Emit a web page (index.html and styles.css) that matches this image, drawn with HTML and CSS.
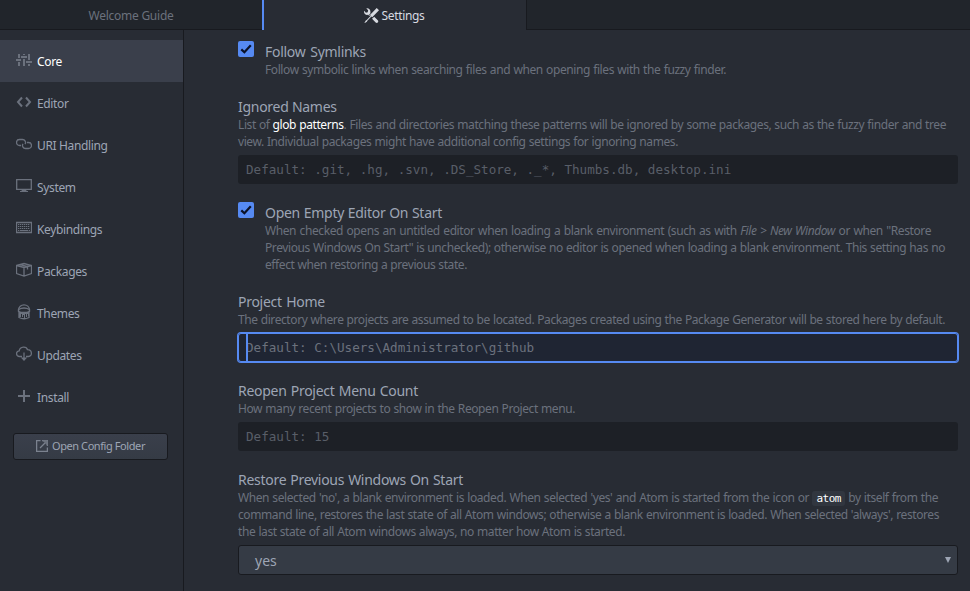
FILE: index.html
```html
<!DOCTYPE html>
<html lang="en">
<head>
<meta charset="utf-8">
<title>Settings</title>
<link rel="stylesheet" href="styles.css">
</head>
<body>
<header class="tabs">
  <div class="tab"><span class="tab-guide">Welcome Guide</span></div>
  <div class="tab active">
    <svg class="tools" viewBox="0 0 16 16"><path d="M4.48 7.27c.26.26 1.28 1.33 1.28 1.33l.56-.58-.88-.91 1.69-1.8s-.76-.74-.43-.45c.32-1.19.03-2.51-.87-3.44C4.93.5 3.66.2 2.52.51l1.93 2-.51 1.96-1.89.52-1.93-1.98C-.19 4.17.1 5.48 1 6.4c.94.98 2.29 1.26 3.48.87zm6.44 1.94l-2.33 2.3 3.84 3.98c.31.33.73.49 1.14.49.41 0 .82-.16 1.14-.49.63-.65.63-1.7 0-2.35l-3.79-3.93zM16 2.53L13.55 0 6.33 7.46l.88.91-4.31 4.46-.99.53-1.39 2.27.35.37 2.2-1.44.51-1.02L7.9 9.08l.88.91L16 2.53z"/></svg>
    <span class="tab-settings">Settings</span>
  </div>
</header>
<div class="body">
  <nav class="sidebar">
    <a class="item selected"><svg class="icon solid" viewBox="0 0 16 16"><path d="M2 2h2v4H2zM0 7h5v2H0zM2 10h2v4H2zM7 2h2v1H7zM5 4h6v2H5zM7 7h2v7H7zM12 2h2v6h-2zM10 9h6v2h-6zM12 12h2v2h-2z"/></svg><span>Core</span></a>
    <a class="item"><svg class="icon thick" viewBox="0 0 16 16"><path d="M6 3.500 2 8l4 4.500M10 3.500 14 8l-4 4.500"/></svg><span>Editor</span></a>
    <a class="item"><svg class="icon" viewBox="0 0 16 16"><path d="M5 9.500H3.500a3 3 0 0 1 0-6h3a3 3 0 0 1 2.500 4.700M11 6.500h1.500a3 3 0 0 1 0 6h-3A3 3 0 0 1 7 7.800"/></svg><span>URI Handling</span></a>
    <a class="item"><svg class="icon" viewBox="0 0 16 16"><path d="M.7 1.700h14.600v9.600H.7z"/><path class="fill" d="M6 11h4l.5 2H12v1H4v-1h1.500z"/></svg><span>System</span></a>
    <a class="item"><svg class="icon" viewBox="0 0 16 16"><path d="M.5 2.500h15v10H.5z"/><path class="keys" d="M2 4.500h12M2 6.500h12M2 8.500h12"/><path class="keys space" d="M2 10.500h12"/></svg><span>Keybindings</span></a>
    <a class="item"><svg class="icon" viewBox="0 0 16 16"><path d="M.5 3.500 8 1.500l7.500 2v8L8 14l-7.500-2.500zM.5 3.500 8 5.500l7.500-2M8 5.500V14M4 2.600l7.500 2v3"/></svg><span>Packages</span></a>
    <a class="item"><svg class="icon" viewBox="0 0 16 16"><path d="M2.500 6.500C2.500-1 13.500-1 13.500 6.500M3 7v6.500q5 2.500 10 0V7"/><path d="M2.500 5.500q5.500-3 11 0v2q-5.500 2-11 0z"/><path class="fill" d="M3 8h10v4h-1v-2h-1v3h-1v-3H9v4H8v-3H7v2H6v-3H5v3H3z"/></svg><span>Themes</span></a>
    <a class="item"><svg class="icon cloud" viewBox="0 0 16 16"><path d="M6 10.500H3.500a2.800 2.800 0 0 1-.3-5.600C4 .2 10.500.2 11.500 3.700c5 0 5 6.800 1 6.800H10M8 6.500v6"/><path class="fill" d="M4.800 11.500h6.400L8 15z"/></svg><span>Updates</span></a>
    <a class="item"><svg class="icon thick" viewBox="0 0 16 16"><path d="M8 2v12M2 8h12"/></svg><span>Install</span></a>
    <button class="config"><svg class="external" viewBox="0 0 12 12"><path d="M4.500.700H.600v10.700h10.800V7.500M4 8l5-5M6 .700h5.400v5.300"/><path class="fill" d="M6 .3h5.700V6z"/></svg><span>Open Config Folder</span></button>
  </nav>
  <main class="panel">
    <section class="setting check">
      <span class="box"><svg viewBox="0 0 16 16"><path d="M3.300 8.400 6.400 11.300 12.800 4.300"/></svg></span>
      <h3><span class="t1">Follow Symlinks</span></h3>
      <p><span class="w461">Follow symbolic links when searching files and when opening files with the fuzzy finder.</span></p>
    </section>
    <section class="setting">
      <h3><span class="t2">Ignored Names</span></h3>
      <p><span class="w708">List of <b>glob patterns</b>. Files and directories matching these patterns will be ignored by some packages, such as the fuzzy finder and tree</span>
      <span class="w440">view. Individual packages might have additional config settings for ignoring names.</span></p>
      <div class="input">Default: .git, .hg, .svn, .DS_Store, ._*, Thumbs.db, desktop.ini</div>
    </section>
    <section class="setting check">
      <span class="box"><svg viewBox="0 0 16 16"><path d="M3.300 8.400 6.400 11.300 12.800 4.300"/></svg></span>
      <h3><span class="t3">Open Empty Editor On Start</span></h3>
      <p><span class="w666">When checked opens an untitled editor when loading a blank environment (such as with <em>File &gt; New Window</em> or when "Restore</span>
      <span class="w680">Previous Windows On Start" is unchecked); otherwise no editor is opened when loading a blank environment. This setting has no</span>
      <span class="w202">effect when restoring a previous state.</span></p>
    </section>
    <section class="setting">
      <h3><span class="t4">Project Home</span></h3>
      <p><span class="w707">The directory where projects are assumed to be located. Packages created using the Package Generator will be stored here by default.</span></p>
      <div class="input focused">Default: C:\Users\Administrator\github</div>
    </section>
    <section class="setting">
      <h3><span class="t5">Reopen Project Menu Count</span></h3>
      <p><span class="w337">How many recent projects to show in the Reopen Project menu.</span></p>
      <div class="input">Default: 15</div>
    </section>
    <section class="setting">
      <h3><span class="t6">Restore Previous Windows On Start</span></h3>
      <p><span class="w700">When selected 'no', a blank environment is loaded. When selected 'yes' and Atom is started from the icon or <code>atom</code> by itself from the</span>
      <span class="w701">command line, restores the last state of all Atom windows; otherwise a blank environment is loaded. When selected 'always', restores</span>
      <span class="w387">the last state of all Atom windows always, no matter how Atom is started.</span></p>
      <div class="select"><span>yes</span><i></i></div>
    </section>
  </main>
</div>
</body>
</html>
```
FILE: styles.css
```css
* { box-sizing: border-box; }
body {
  margin: 0;
  height: 591px;
  overflow: hidden;
  display: flex;
  flex-direction: column;
  background: #282c34;
  color: #9da5b4;
  font-family: "Noto Sans", "Open Sans", sans-serif;
  font-size: 12px;
}
svg { display: block; flex: none; }
.tabs { display: flex; flex: none; height: 30px; background: #21252b; box-shadow: inset 0 -1px #181a1f; }
.tab { width: 262px; display: flex; align-items: center; justify-content: center; color: #6b717d; padding-top: 1px; }
.tab.active { width: 265px; background: #282c34; color: #d7dae0; border-left: 2px solid #568af2; border-right: 1px solid #181a1f; padding-right: 2px; }
.tools { width: 15px; height: 15px; fill: #d7dae0; margin-right: 3px; }
.tab-guide { letter-spacing: -.25px; }
.tab-settings { letter-spacing: -.35px; }
.body { flex: 1; display: flex; min-height: 0; }
.sidebar { width: 184px; flex: none; border-right: 1px solid #181a1f; padding-top: 10px; }
.item { height: 42px; display: flex; align-items: center; padding-left: 16px; letter-spacing: -.35px; }
.item span { margin-left: 5px; padding-top: 0; }
.selected { background: #3a3f4b; color: #fff; }
.icon { width: 16px; height: 16px; margin-top: -2px; fill: none; stroke: #6b717d; stroke-width: 1.300; }
.solid { fill: #6b717d; stroke: none; }
.thick { stroke-width: 2; }
.fill { fill: #6b717d; stroke: none; }
.keys { stroke-width: 1; stroke-dasharray: 1.300 .7; }
.space { stroke-dasharray: 1.300 .7 8 .7; }
.config {
  width: 155px; height: 27px; margin: 15px 0 0 13px; padding: 0 0 3px;
  display: flex; align-items: center; justify-content: center;
  border: 1px solid #181a1f; border-radius: 3px;
  background: linear-gradient(#3a3f4b, #353b45);
  color: #9da5b4; font: inherit; font-size: 11px; letter-spacing: -.42px;
}
.external { width: 12px; height: 12px; margin: 2px 4px 0 0; fill: none; stroke: #7b828f; stroke-width: 1.300; }
.panel { flex: 1; padding: 13px 12px 0 54px; display: flex; flex-direction: column; gap: 20px; }
.setting { flex: none; position: relative; }
.check { padding-left: 27px; }
.box { position: absolute; left: 0; top: -2px; width: 16px; height: 16px; border-radius: 2px; background: #568af2; }
.box path { fill: none; stroke: #0b1228; stroke-width: 2.200; }
h3 { margin: 0; height: 18px; line-height: 18px; font-size: 14px; font-weight: 400; white-space: nowrap; letter-spacing: -.28px; }
h3 span { display: block; text-align-last: justify; }
p { margin: 0; color: #6b717d; font-size: 12px; line-height: 17px; letter-spacing: -.41px; }
p > span { display: block; height: 17px; white-space: nowrap; text-align-last: justify; }
b { color: #fff; font-weight: 400; }
code { font: 11px/15px "DejaVu Sans Mono", monospace; color: #fff; background: #31363f; border-radius: 3px; padding: 1px 4px; letter-spacing: -.5px; }
.input {
  height: 29px; margin-top: 5px; padding-left: 8px; line-height: 29px;
  border-radius: 3px; background: #1d2026; color: #595e68;
  font-family: "DejaVu Sans Mono", monospace; font-size: 12.600px; white-space: pre;
}
.focused { background: #1f2533; color: #6b717d; box-shadow: 0 0 0 1px #568af2, inset 0 0 0 1px #568af2; position: relative; }
.focused::before { content: ""; position: absolute; left: 8px; top: 1px; width: 2px; height: 27px; background: #568af2; }
.select {
  height: 30px; margin-top: 5px; padding: 0 6px 0 16px;
  display: flex; align-items: center; justify-content: space-between;
  border: 1px solid #181a1f; border-radius: 3px; background: #353b45; font-size: 14px;
}
.select i { border: 3px solid transparent; border-top: 6px solid #9da5b4; border-bottom: 0; }
.w461 { width: 461px; } .w708 { width: 708px; } .w440 { width: 440px; }
.w666 { width: 666px; } .w680 { width: 680px; } .w202 { width: 202px; }
.w707 { width: 707px; } .w337 { width: 337px; } .w700 { width: 700px; }
.w701 { width: 701px; } .w387 { width: 387px; }
.t1 { width: 101px; } .t2 { width: 98px; } .t3 { width: 177px; }
.t4 { width: 87px; } .t5 { width: 180px; } .t6 { width: 225px; }
```
